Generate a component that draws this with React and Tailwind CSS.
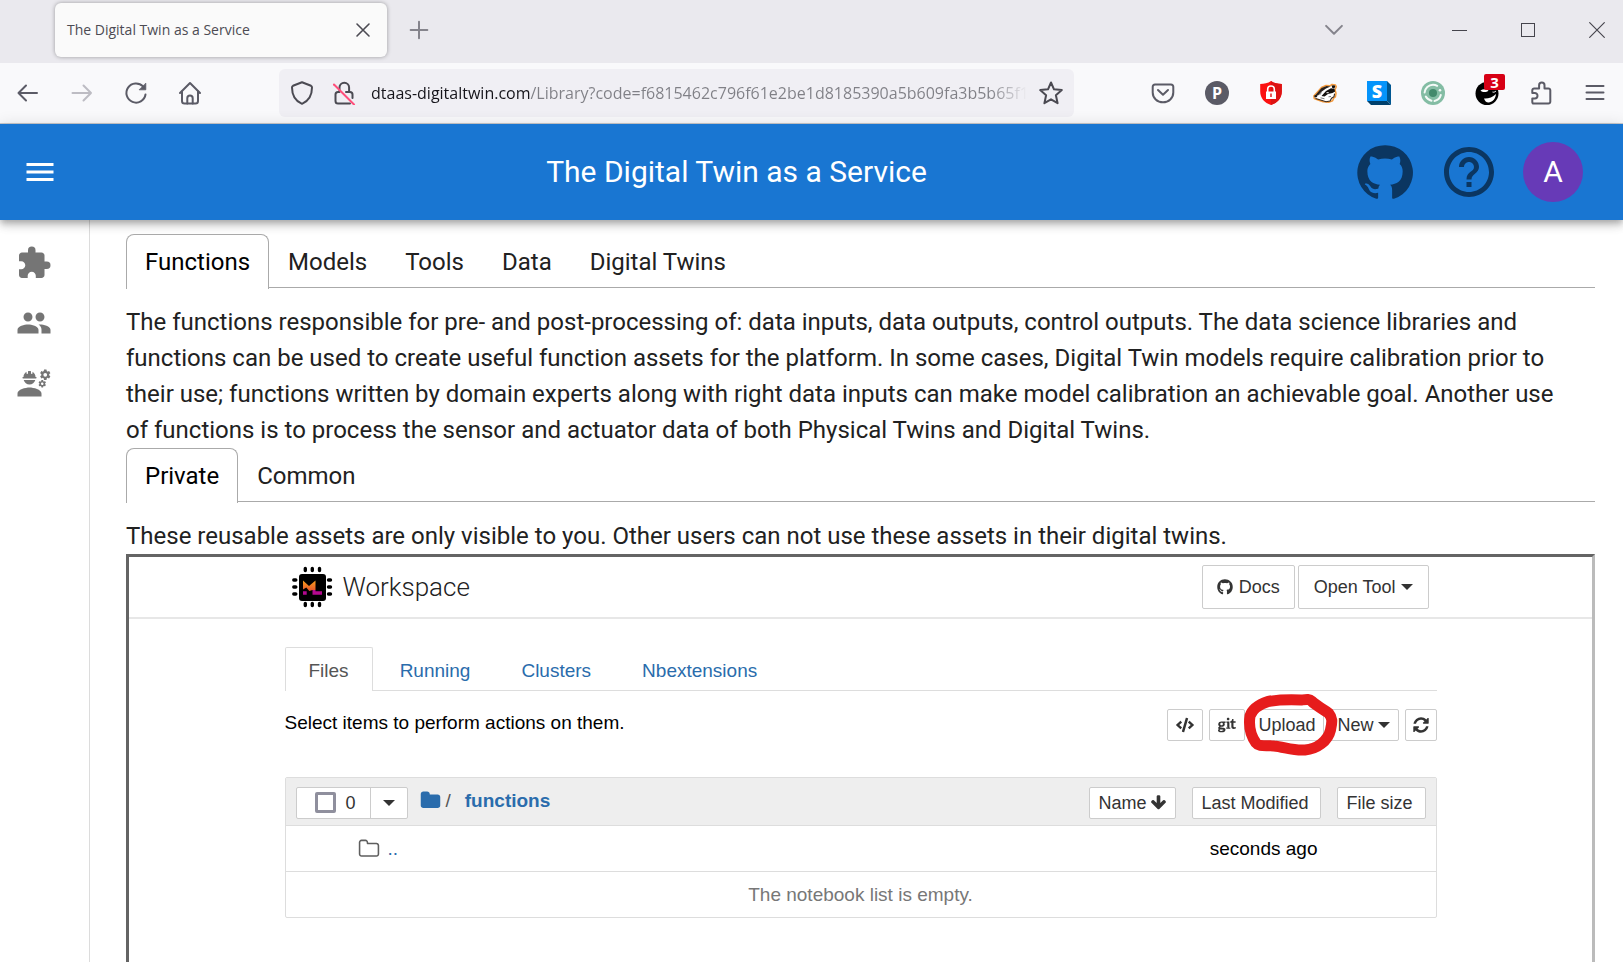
import React from "react";
import { MdExtension, MdPeople, MdEngineering, MdMenu, MdHelpOutline } from "react-icons/md";
import { FaGithub, FaCode, FaGit } from "react-icons/fa";

/* ---------- Browser chrome icons ---------- */

function Stroke({ children, className = "size-6", width = 2 }) {
  return (
    <svg
      viewBox="0 0 24 24"
      className={className}
      fill="none"
      stroke="currentColor"
      strokeWidth={width}
      strokeLinecap="round"
      strokeLinejoin="round"
      aria-hidden="true"
    >
      {children}
    </svg>
  );
}

const BackIcon = () => (
  <Stroke>
    <path d="M21 12H2.500M10 4.500 2.500 12l7.500 7.500" />
  </Stroke>
);

const ForwardIcon = () => (
  <Stroke>
    <path d="M2.500 12H21M13.500 4.500 21 12l-7.500 7.500" />
  </Stroke>
);

const ReloadIcon = () => (
  <Stroke>
    <path d="M21.500 13.500A9.600 9.600 0 1 1 19 5.400" />
    <path d="M21.800 2.500v6.300h-6.300z" fill="currentColor" strokeWidth="0.800" />
  </Stroke>
);

const HomeIcon = () => (
  <Stroke>
    <path d="M2 12 12 2l10 10" />
    <path d="M4 10.500V20a2.500 2.500 0 0 0 2.500 2.500h11A2.500 2.500 0 0 0 20 20v-9.500" />
    <path d="M9.300 22.500v-5.300a2.700 2.700 0 0 1 5.400 0v5.300" />
  </Stroke>
);

const ShieldIcon = () => (
  <Stroke>
    <path d="M12 1.200 21 4.800c.8.400 1 1 1 1.700 0 7-2.800 13.300-10 16.300C4.800 19.800 2 13.500 2 6.500c0-.7.200-1.300 1-1.700z" />
  </Stroke>
);

const InsecureIcon = () => (
  <Stroke>
    <path d="M7.500 11V6.500a4.800 4.800 0 0 1 9.600 0V11" />
    <path d="M7 11H6a2.500 2.500 0 0 0-2.500 2.500V20A2.500 2.500 0 0 0 6 22.500h12" />
    <path d="M14 11h4a2.500 2.500 0 0 1 2.500 2.500V17" />
    <path d="M2 3.500 22 23.500" stroke="#ff4f7b" />
  </Stroke>
);

const StarIcon = () => (
  <Stroke>
    <path d="M12 1.500l3 6.800 7.800.8-5.900 5.100 1.700 8L12 18.300l-6.600 3.900 1.700-8L1.200 9.100 9 8.300z" />
  </Stroke>
);

const PocketIcon = () => (
  <Stroke>
    <path d="M4 3.500h16A2.300 2.300 0 0 1 22.300 6v5.500a10.300 9.800 0 0 1-20.600 0V6A2.300 2.300 0 0 1 4 3.500z" />
    <path d="m7 9 5 4.700L17 9" />
  </Stroke>
);

const ProfileIcon = () => (
  <span className="flex size-6 items-center justify-center rounded-full bg-[#5b5b66] text-base leading-6 font-bold text-white">
    P
  </span>
);

const RedShieldIcon = () => (
  <svg viewBox="0 0 24 24" className="size-6" aria-hidden="true">
    <path d="M12 0c3 2.200 7 3 10.800 3v7.500C22.800 17 18.500 22 12 24 5.500 22 1.200 17 1.200 10.500V3C5 3 9 2.200 12 0z" fill="#fb1111" />
    <path d="M12 0c3 2.200 7 3 10.800 3v7.500C22.800 17 18.500 22 12 24z" fill="#dd1313" />
    <path d="M8.700 11V8.300a3.300 3.300 0 0 1 6.600 0V11" fill="none" stroke="#fff" strokeWidth="1.600" />
    <rect x="7" y="10.500" width="10" height="7.500" fill="#fff" />
    <path d="M11.300 12.500h1.400v3.500h-1.400z" fill="#dd1313" />
  </svg>
);

const BadgerIcon = () => (
  <svg viewBox="0 0 24 24" className="size-6" aria-hidden="true">
    <path
      d="M.8 15 4.500 11 8.500 6.500l4.500-2 4 .3 2-1.300 3.500.6.800 1.700-1.300 3 1 3.500-.6 3.500-1.500 1-1.300 3-4 1.500-5.500-.5L6.500 19.500 1.200 17.500z"
      fill="#fff"
      stroke="#f59a3c"
      strokeWidth="1.500"
      strokeLinejoin="round"
    />
    <path d="M8.500 7 13.500 5 17.500 5.500 13 7.500 8.500 10.800 5 14.500 1.600 15z" fill="#2a211c" />
    <path d="M1.300 14.600 3.500 14l.8 1.600-1.300 1-1.600-.4z" fill="#14100e" />
    <path d="M8.500 15 13 10l5-2.700 3.500.6.600 2.600-2.600 1.400-4.500 1-3.500 2.700z" fill="#14100e" />
    <path d="m18.600 4.600 3-.3.600 1.200-1 2.200-1.900-.7z" fill="#14100e" />
    <path d="M13.500 11.700h2.200" stroke="#fff" strokeWidth="1" />
    <path d="M2.500 17.500 6.800 18.700l6.200 2 4-.7 1.600-2.800 2.400-1.500.6-3" fill="none" stroke="#3b2a1e" strokeWidth="1.100" />
    <path d="M7.500 16.800l4 1M15.500 15.800l2.500-.3M6.500 14l2-2.500" stroke="#6b6b6b" strokeWidth="0.900" />
  </svg>
);

const BlueSIcon = () => (
  <span className="relative flex size-6">
    <svg viewBox="0 0 24 24" className="absolute inset-0 size-6" aria-hidden="true">
      <path d="M20 0l4 4v20l-4-4z" fill="#005791" />
      <path d="M0 20h20l4 4H4z" fill="#00406c" />
      <path d="M0 0h20v20H0z" fill="#0594fb" />
    </svg>
    <span className="relative flex size-5 items-center justify-center text-lg leading-5 font-extrabold text-white">S</span>
  </span>
);

const GreenRingIcon = () => (
  <svg viewBox="0 0 24 24" className="size-6" aria-hidden="true">
    <circle cx="12" cy="12" r="12" fill="#84bda4" />
    <circle cx="12" cy="12" r="4" fill="#438a6c" />
    <path d="M3.600 11.500A8.500 8.500 0 0 1 12 3.700c1.500 0 3 .4 4.200 1.100" fill="none" stroke="#f4faf7" strokeWidth="2" strokeLinecap="round" />
    <path d="M19.800 14A8.400 8.400 0 0 1 13.500 20" fill="none" stroke="#f4faf7" strokeWidth="2" strokeLinecap="round" />
    <path d="M4.800 15.500c1.500 2.700 3 3.600 5.700 4.200" fill="none" stroke="#f4faf7" strokeWidth="2" strokeLinecap="round" />
    <circle cx="19" cy="9.300" r="1.300" fill="#f4faf7" />
  </svg>
);

const MaskIcon = () => (
  <span className="relative block size-6">
    <svg viewBox="0 0 24 24" className="size-6" aria-hidden="true">
      <circle cx="12" cy="12.500" r="11.500" fill="#000" />
      <path d="M5.500 9.500c2.500-1.800 6-1.500 8 .2-1.800 1.600-6 2-8-.2z" fill="#fff" />
      <path d="M9 17.500c4.500.3 8.500-1.200 12-4.500-.3 4.500-3.300 7.700-7 8.500-2.500.2-4.300-1.500-5-4z" fill="#fff" />
      <path d="M17.500 11c1 .5 2.500 0 3.500-1" fill="none" stroke="#fff" strokeWidth="1" />
    </svg>
    <span className="absolute -top-[7px] left-[9px] flex h-4 w-[21px] items-center justify-center rounded-xs bg-[#d70015] text-[15px] leading-4 font-bold text-white">
      3
    </span>
  </span>
);

const PuzzleIcon = () => (
  <Stroke>
    <path d="M4.500 22.500h15a1.800 1.800 0 0 0 1.800-1.800V9.300a1.800 1.800 0 0 0-1.800-1.800h-4V4.300a2.700 2.700 0 0 0-5.400 0v3.200h-5A1.800 1.800 0 0 0 3.300 9.300V12h2.500a2.700 2.700 0 0 1 0 5.400H3.300v3.300c0 1 .4 1.800 1.200 1.800z" />
  </Stroke>
);

const BurgerIcon = () => (
  <Stroke>
    <path d="M3.500 5h17M3.500 11.500h17M3.500 18h17" />
  </Stroke>
);

/* ---------- Notebook icons ---------- */

function Glyph({ d, className }) {
  return (
    <svg viewBox="0 0 1792 1792" className={className} fill="currentColor" aria-hidden="true">
      <path d={d} />
    </svg>
  );
}

const REFRESH =
  "M1639 1056q0 5-1 7-64 268-268 434.500t-478 166.500q-146 0-282.500-55t-243.500-157l-129 129q-19 19-45 19t-45-19-19-45v-448q0-26 19-45t45-19h448q26 0 45 19t19 45-19 45l-137 137q71 66 161 102t187 36q134 0 250-65t186-179q11-17 53-117 8-23 30-23h192q13 0 22.500 9.500t9.500 22.500zm25-800v448q0 26-19 45t-45 19h-448q-26 0-45-19t-19-45 19-45l138-138q-148-137-349-137-134 0-250 65t-186 179q-11 17-53 117-8 23-30 23h-199q-13 0-22.500-9.500t-9.500-22.500v-7q65-268 270-434.500t480-166.500q146 0 284 55.500t245 156.500l130-129q19-19 45-19t45 19 19 45z";
const FOLDER =
  "M1728 608v704q0 92-66 158t-158 66h-1216q-92 0-158-66t-66-158v-960q0-92 66-158t158-66h320q92 0 158 66t66 158v32h672q92 0 158 66t66 158z";
const FOLDER_OPEN =
  "M1600 1312v-704q0-40-28-68t-68-28h-704q-40 0-68-28t-28-68v-64q0-40-28-68t-68-28h-320q-40 0-68 28t-28 68v960q0 40 28 68t68 28h1216q40 0 68-28t28-68zm128-704v704q0 92-66 158t-158 66h-1216q-92 0-158-66t-66-158v-960q0-92 66-158t158-66h320q92 0 158 66t66 158v32h672q92 0 158 66t66 158z";
const ARROW_DOWN =
  "M1675 832q0 53-37 90l-651 652q-39 37-91 37-53 0-90-37l-651-652q-38-36-38-90 0-53 38-91l74-75q39-37 91-37 53 0 90 37l294 294v-704q0-52 38-90t90-38h128q52 0 90 38t38 90v704l294-294q37-37 90-37 52 0 91 37l75 75q37 39 37 91z";

const Caret = () => (
  <svg viewBox="0 0 12 6" className="h-1.5 w-3" fill="currentColor" aria-hidden="true">
    <path d="M0 0h12L6 6z" />
  </svg>
);

const GithubMark = () => (
  <svg viewBox="0 0 24 24" className="size-[60px]" fill="currentColor" aria-hidden="true">
    <path d="M12 1.270a11 11 0 00-3.480 21.460c.55.090.73-.28.73-.55v-1.840c-3.030.64-3.670-1.460-3.670-1.460-.55-1.290-1.280-1.650-1.280-1.650-.92-.65.1-.65.1-.65 1.100 0 1.730 1.100 1.730 1.100.92 1.650 2.570 1.200 3.210.92a2 2 0 01.64-1.470c-2.470-.27-5.040-1.190-5.040-5.500 0-1.100.46-2.100 1.200-2.840a3.760 3.760 0 010-2.930s.91-.28 3.110 1.100c1.800-.49 3.700-.49 5.500 0 2.100-1.380 3.020-1.100 3.020-1.100a3.760 3.760 0 01.1 2.930c.83.74 1.200 1.740 1.200 2.940 0 4.210-2.570 5.130-5.040 5.400.45.37.82.92.82 2.020v3.030c0 .27.1.64.73.55A11 11 0 0012 1.270" />
  </svg>
);

const ChipLogo = () => (
  <svg viewBox="0 0 42 42" className="size-[42px]" aria-hidden="true">
    <defs>
      <linearGradient id="chip" x1="0" y1="0" x2="0" y2="1">
        <stop offset="0" stopColor="#f9a01b" />
        <stop offset="1" stopColor="#e5532d" />
      </linearGradient>
    </defs>
    <rect x="8" y="8" width="27" height="27" rx="3" fill="#000" />
    <g stroke="#000" strokeWidth="3.400" strokeLinecap="round">
      <path d="M14.300 2.500v2M21.300 2.500v2M28.500 2.500v2M14.300 37.500v2M21.300 37.500v2M28.500 37.500v2" />
      <path d="M2.800 14h2M2.800 21h2M2.800 28h2M37.500 14h2M37.500 21h2M37.500 28h2" />
    </g>
    <path d="M12 14.500 18 20 24.500 14.500V24H21.500l-3.200 1-3-3.500L12 23.500z" fill="url(#chip)" />
    <path d="M12 25.300h3.700v3.400H12zM21.500 24H24.500v1.300H31v3.400h-9.500z" fill="#b5088f" />
  </svg>
);

/* ---------- Browser window ---------- */

function TitleBar() {
  const control = "flex h-full w-[52px] items-center justify-center";
  return (
    <div className="flex h-[63px] items-center bg-[#eae9ee] pb-[3px]">
      <div className="ml-[55px] flex h-[54px] w-[332px] items-center justify-between rounded-md bg-[#fafafa] pr-4 pl-3 text-sm text-[#4c4b53] shadow-[0_0_4px_rgba(0,0,0,0.35)]">
        <span>The Digital Twin as a Service</span>
        <button aria-label="Close tab" className="flex size-4 items-center justify-center">
          <Stroke className="size-4" width={2.4}>
            <path d="M3 3l18 18M21 3 3 21" />
          </Stroke>
        </button>
      </div>
      <button aria-label="New tab" className="ml-[22px] flex size-5 items-center justify-center text-[#85848c]">
        <Stroke className="size-5" width={2.4}>
          <path d="M12 2v20M2 12h20" />
        </Stroke>
      </button>
      <div className="flex-1" />
      <button aria-label="List all tabs" className={`${control} mr-[73px] text-[#85848c]`}>
        <Stroke className="size-5" width={2.4}>
          <path d="m2.500 7 9.500 9.500L21.500 7" />
        </Stroke>
      </button>
      <div className="flex h-full gap-[17px] text-[#45444c]">
        <button aria-label="Minimize" className={control}>
          <span className="h-px w-[15px] bg-[#45444c]" />
        </button>
        <button aria-label="Maximize" className={control}>
          <span className="size-3.5 border border-[#45444c]" />
        </button>
        <button aria-label="Close window" className={control}>
          <Stroke className="size-4" width={1.7}>
            <path d="M1 1l22 22M23 1 1 23" />
          </Stroke>
        </button>
      </div>
    </div>
  );
}

function ToolButton({ label, dim, children }) {
  return (
    <button
      aria-label={label}
      className={`flex h-12 w-[54px] items-center justify-center ${dim ? "text-[#bdbcc3]" : "text-[#5b5b66]"}`}
    >
      {children}
    </button>
  );
}

function NavBar() {
  return (
    <div className="flex h-[61px] items-center border-b border-[#cccccf] bg-[#f9f9fb] px-px">
      <ToolButton label="Back"><BackIcon /></ToolButton>
      <ToolButton label="Forward" dim><ForwardIcon /></ToolButton>
      <ToolButton label="Reload"><ReloadIcon /></ToolButton>
      <ToolButton label="Home"><HomeIcon /></ToolButton>
      <div className="mx-[62px] flex h-12 min-w-0 flex-1 items-center rounded-md bg-[#f0eff4] px-[11px] text-[#4b4a52]">
        <ShieldIcon />
        <span className="ml-[18px]"><InsecureIcon /></span>
        <input
          aria-label="Address"
          type="text"
          readOnly
          value="dtaas-digitaltwin.com/Library?code=f6815462c796f61e2be1d8185390a5b609fa3b5b65f1"
          className="mr-2 ml-[15px] min-w-0 flex-1 bg-[linear-gradient(to_right,#15141a_159px,#808086_159px,#808086_calc(100%-40px),transparent_calc(100%-4px))] bg-clip-text text-base text-transparent outline-none"
        />
        <button aria-label="Bookmark this page"><StarIcon /></button>
      </div>
      <ToolButton label="Save to Pocket"><PocketIcon /></ToolButton>
      <ToolButton label="Profile"><ProfileIcon /></ToolButton>
      <ToolButton label="Ad blocker"><RedShieldIcon /></ToolButton>
      <ToolButton label="Tracker blocker"><BadgerIcon /></ToolButton>
      <ToolButton label="Styles"><BlueSIcon /></ToolButton>
      <ToolButton label="Cookies"><GreenRingIcon /></ToolButton>
      <ToolButton label="Privacy"><MaskIcon /></ToolButton>
      <ToolButton label="Extensions"><PuzzleIcon /></ToolButton>
      <ToolButton label="Menu"><BurgerIcon /></ToolButton>
    </div>
  );
}

/* ---------- Application ---------- */

function AppBar() {
  return (
    <header className="relative z-10 flex h-24 items-center gap-6 bg-[#1976d2] pr-10 pl-[22px] text-white shadow-[0_3px_6px_-1px_rgba(0,0,0,0.2),0_6px_8px_0_rgba(0,0,0,0.14),0_1px_15px_0_rgba(0,0,0,0.12)]">
      <button aria-label="Open menu" className="mr-15"><MdMenu className="size-9" /></button>
      <h1 className="flex-1 text-center text-[30px] leading-[48px]">The Digital Twin as a Service</h1>
      <a href="#github" aria-label="GitHub" className="text-[#0b3661]"><GithubMark /></a>
      <a href="#help" aria-label="Help" className="text-[#0b3661]"><MdHelpOutline className="size-[60px]" /></a>
      <button aria-label="Account" className="flex size-[60px] items-center justify-center rounded-full bg-[#673ab7] text-[30px]">
        A
      </button>
    </header>
  );
}

function SideNav() {
  return (
    <nav className="flex w-[90px] shrink-0 flex-col gap-6 border-r border-[#dcdcdc] pt-[25px] pl-4 text-[#757575]">
      <a href="#library" aria-label="Library" className="self-start"><MdExtension className="size-9" /></a>
      <a href="#twins" aria-label="Digital twins" className="self-start"><MdPeople className="size-9" /></a>
      <a href="#workbench" aria-label="Workbench" className="self-start"><MdEngineering className="size-9" /></a>
    </nav>
  );
}

function TabStrip({ label, tabs }) {
  return (
    <div role="tablist" aria-label={label} className="mb-4 flex h-[54px] border-b border-[#aaaaaa]">
      {tabs.map((tab, i) => (
        <button
          key={tab}
          role="tab"
          aria-selected={i === 0}
          className={`h-[55px] rounded-t-lg border border-b-0 px-[18px] ${
            i === 0 ? "border-[#aaaaaa] bg-white text-black" : "border-transparent"
          }`}
        >
          {tab}
        </button>
      ))}
    </div>
  );
}

const smallButton =
  "flex h-8 items-center rounded-xs border border-[#cccccc] bg-white px-2 text-lg leading-6 text-[#333333]";

function WorkspaceHeader() {
  return (
    <div className="border-b-2 border-[#e7e7e7]">
      <div className="mx-auto flex h-[60px] max-w-[1152px] items-center justify-between pr-2 pl-1.5">
        <a href="#workspace" className="flex items-center gap-2.5 font-['Roboto',sans-serif] text-[26px] font-light text-[#222222]">
          <ChipLogo />
          Workspace
        </a>
        <div className="flex gap-[3px] text-lg text-[#333333]">
          <a href="#docs" className="flex h-11 items-center gap-1.5 rounded-xs border border-[#cccccc] px-3.5">
            <FaGithub className="size-4" />
            Docs
          </a>
          <button className="flex h-11 items-center gap-[5px] rounded-xs border border-[#cccccc] px-[15px]">
            Open Tool
            <Caret />
          </button>
        </div>
      </div>
    </div>
  );
}

function NotebookTabs() {
  return (
    <div role="tablist" aria-label="Notebook" className="mt-7 flex h-11 gap-[3px] border-b border-[#dddddd] text-[#2a6cac]">
      {["Files", "Running", "Clusters", "Nbextensions"].map((tab, i) => (
        <button
          key={tab}
          role="tab"
          aria-selected={i === 0}
          className={`h-11 rounded-t-xs border border-b-0 px-[23px] pt-[3px] ${
            i === 0 ? "border-[#dddddd] bg-white text-[#555555]" : "border-transparent"
          }`}
        >
          {tab}
        </button>
      ))}
    </div>
  );
}

function Actions() {
  return (
    <div className="mt-[18px] flex items-center justify-between">
      <p className="pb-1 text-black">Select items to perform actions on them.</p>
      <div className="relative flex gap-1.5">
        <button aria-label="Code" className={smallButton}><FaCode className="size-[18px]" /></button>
        <div className="flex gap-1">
          <button aria-label="Git" className={smallButton}><FaGit className="size-[18px]" /></button>
          <button className={smallButton}>Upload</button>
          <button className={`${smallButton} gap-1`}>
            New
            <Caret />
          </button>
        </div>
        <button
          aria-label="Refresh"
          className="flex size-8 items-center justify-center rounded-xs border border-[#cccccc] bg-white text-[#333333]"
        >
          <Glyph d={REFRESH} className="size-[18px]" />
        </button>
        <svg
          viewBox="0 0 100 70"
          className="pointer-events-none absolute -top-[19px] right-24 h-[70px] w-[100px]"
          fill="none"
          stroke="#e61c1c"
          strokeLinecap="round"
          strokeLinejoin="round"
          aria-hidden="true"
        >
          <path
            d="M60 10C48 9.500 36 10 27 11.500 18 14.500 11 20 9 26 7.500 36 10 46 15 53c3 4 10 2 18 3 10 1 20 5 31 4 12-1 23-9 25.500-20 2-9 2-12-2-17-6-4-13-8-17-12-2-2-5-1.500-10-1"
            strokeWidth="11"
          />
        </svg>
      </div>
    </div>
  );
}

function FileTable() {
  return (
    <div className="mt-9 overflow-hidden rounded-xs border border-[#dddddd]">
      <table className="w-full border-separate border-spacing-0 text-left">
        <thead className="bg-[#eeeeee]">
          <tr className="h-12">
            <th className="border-b border-[#dddddd] pt-0.5 pl-2.5 font-normal">
              <div className="flex items-center">
                <div className="flex h-8 rounded-xs border border-[#cccccc] bg-white text-lg text-[#333333]">
                  <label className="flex items-center gap-2.5 border-r border-[#cccccc] pr-3.5 pl-[18px]">
                    <input
                      type="checkbox"
                      aria-label="Select all"
                      className="size-[21px] appearance-none rounded-xs border-3 border-[#8f8f9d] bg-white"
                    />
                    0
                  </label>
                  <button aria-label="Selection options" className="flex w-9 items-center justify-center">
                    <Caret />
                  </button>
                </div>
                <div className="ml-3 flex items-center pb-1">
                  <a href="#root" aria-label="Root folder" className="text-[#2a6cac]">
                    <Glyph d={FOLDER} className="size-[21px]" />
                  </a>
                  <span className="ml-[5px] text-[#555555]">/</span>
                  <a href="#functions" className="ml-3.5 font-bold text-[#2a6cac]">functions</a>
                </div>
              </div>
            </th>
            <th className="w-px border-b border-[#dddddd] pt-0.5 pr-4 font-normal whitespace-nowrap">
              <button className={`${smallButton} gap-1`}>
                Name
                <Glyph d={ARROW_DOWN} className="size-[17px]" />
              </button>
            </th>
            <th className="w-px border-b border-[#dddddd] pt-0.5 pr-4 font-normal whitespace-nowrap">
              <button className={`${smallButton} pr-3`}>Last Modified</button>
            </th>
            <th className="w-px border-b border-[#dddddd] pt-0.5 pr-2.5 font-normal whitespace-nowrap">
              <button className={`${smallButton} pr-3`}>File size</button>
            </th>
          </tr>
        </thead>
        <tbody>
          <tr className="h-[46px]">
            <td className="border-b border-[#dddddd]" colSpan={2}>
              <a href="#up" className="flex items-center gap-2 pl-[72px] text-[#2a6cac]">
                <Glyph d={FOLDER_OPEN} className="size-[22px] text-[#5e5e5e]" />
                ..
              </a>
            </td>
            <td className="border-b border-[#dddddd] pr-5 text-right whitespace-nowrap text-black">seconds ago</td>
            <td className="border-b border-[#dddddd]" />
          </tr>
          <tr className="h-[45px]">
            <td colSpan={4} className="text-center text-[#777777]">The notebook list is empty.</td>
          </tr>
        </tbody>
      </table>
    </div>
  );
}

function Workspace() {
  return (
    <section
      aria-label="Workspace"
      className="flex-1 border-3 border-b-0 border-t-[#646464] border-r-[#bbbbbb] border-l-[#646464] bg-white pb-10 font-['Liberation_Sans',Arial,sans-serif] text-[19px] leading-7"
    >
      <WorkspaceHeader />
      <div className="mx-auto max-w-[1152px]">
        <NotebookTabs />
        <Actions />
        <FileTable />
      </div>
    </section>
  );
}

export default function App() {
  return (
    <div className="flex min-h-screen flex-col bg-white font-['Open_Sans','Noto_Sans',sans-serif]">
      <TitleBar />
      <NavBar />
      <div className="flex flex-1 flex-col font-['Roboto',sans-serif] text-2xl leading-9 text-[#212121]">
        <AppBar />
        <div className="flex flex-1">
          <SideNav />
          <main className="flex min-w-0 flex-1 flex-col pt-3.5 pr-7 pl-9">
            <TabStrip label="Assets" tabs={["Functions", "Models", "Tools", "Data", "Digital Twins"]} />
            <p className="pr-6">
              The functions responsible for pre- and post-processing of: data inputs, data outputs, control outputs. The
              data science libraries and functions can be used to create useful function assets for the platform. In some
              cases, Digital Twin models require calibration prior to their use; functions written by domain experts along
              with right data inputs can make model calibration an achievable goal. Another use of functions is to process
              the sensor and actuator data of both Physical Twins and Digital Twins.
            </p>
            <TabStrip label="Visibility" tabs={["Private", "Common"]} />
            <p>These reusable assets are only visible to you. Other users can not use these assets in their digital twins.</p>
            <Workspace />
          </main>
        </div>
      </div>
    </div>
  );
}
